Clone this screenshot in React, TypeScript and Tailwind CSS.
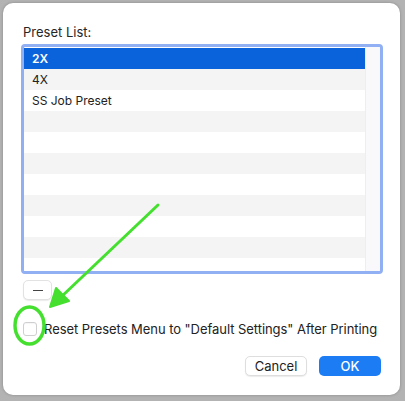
import React from 'react';

const rows = ['2X', '4X', 'SS Job Preset', '', '', '', '', '', '', '', '', ''];

const Annotation: React.FC = () => (
  <svg className="pointer-events-none absolute left-0 top-0" width="405" height="401" viewBox="0 0 405 401">
    <g fill="none" stroke="#45e02f" strokeLinecap="round" strokeLinejoin="round">
      <ellipse cx="29.5" cy="325.5" rx="14.5" ry="18.5" strokeWidth="3.5" />
      <path d="M158 205 L60 298" strokeWidth="3" />
    </g>
    <path d="M50 307 L56 288 L69 301 Z" fill="#45e02f" stroke="#45e02f" strokeWidth="2" strokeLinejoin="round" />
  </svg>
);

const App: React.FC = () => {
  return (
    <div className="relative w-[405px] h-[401px] overflow-hidden bg-[#b3b3b3] pt-[3px] pl-[3px] font-['Inter',sans-serif] text-[#1d1d1f]">
      <div className="w-[397px] h-[392px] rounded-[10px] bg-white shadow-[0_0_3px_rgba(0,0,0,0.25)] flex flex-col pl-[18px] pr-[17px] pt-[21px]">
        <div className="pl-[2px] text-[13px] leading-[16px] text-[#262626]">Preset List:</div>

        {/* list */}
        <div className="mt-[4px] w-[362px] h-[230px] rounded-[4px] border-[3px] border-[#90b0f3] flex overflow-hidden">
          <div className="flex-1 pt-[1px] flex flex-col">
            {rows.map((r, i) => (
              <div
                key={i}
                className={
                  'h-[21px] shrink-0 pl-[8px] flex items-center text-[12px] ' +
                  (i === 0
                    ? 'bg-[#0b63dc] text-white font-semibold'
                    : i % 2 === 1
                    ? 'bg-[#f4f4f4] text-[#222]'
                    : 'bg-white text-[#222]')
                }
              >
                {r}
              </div>
            ))}
          </div>
          <div className="w-[15px] bg-[#f9f9fb] border-l border-[#eeeeee]" />
        </div>

        {/* minus */}
        <div className="mt-[6px] ml-[2px] w-[29px] h-[20px] rounded-[5px] bg-white border border-[#e2e2e2] shadow-[0_1px_1px_rgba(0,0,0,0.08)] flex items-center justify-center">
          <div className="w-[10px] h-px bg-[#444]" />
        </div>

        {/* checkbox */}
        <div className="mt-[21px] ml-[2px] flex items-center gap-[7px]">
          <div className="w-[14px] h-[14px] rounded-[3px] border border-[#cfcfcf] bg-white shadow-[inset_0_1px_1px_rgba(0,0,0,0.04)]" />
          <span className="text-[13px] leading-[16px] tracking-[-0.05px] text-[#222] whitespace-nowrap">
            Reset Presets Menu to "Default Settings" After Printing
          </span>
        </div>

        {/* buttons */}
        <div className="mt-[19px] flex justify-end gap-[12px] pr-[2px]">
          <button className="w-[62px] h-[20px] rounded-[5px] bg-white border border-[#dedede] shadow-[0_1px_1px_rgba(0,0,0,0.08)] text-[13px] leading-none text-[#222]">
            Cancel
          </button>
          <button className="w-[62px] h-[20px] rounded-[5px] bg-[#1b7cf4] text-[13px] leading-none text-white font-medium">
            OK
          </button>
        </div>
      </div>
      <Annotation />
    </div>
  );
};

export default App;
